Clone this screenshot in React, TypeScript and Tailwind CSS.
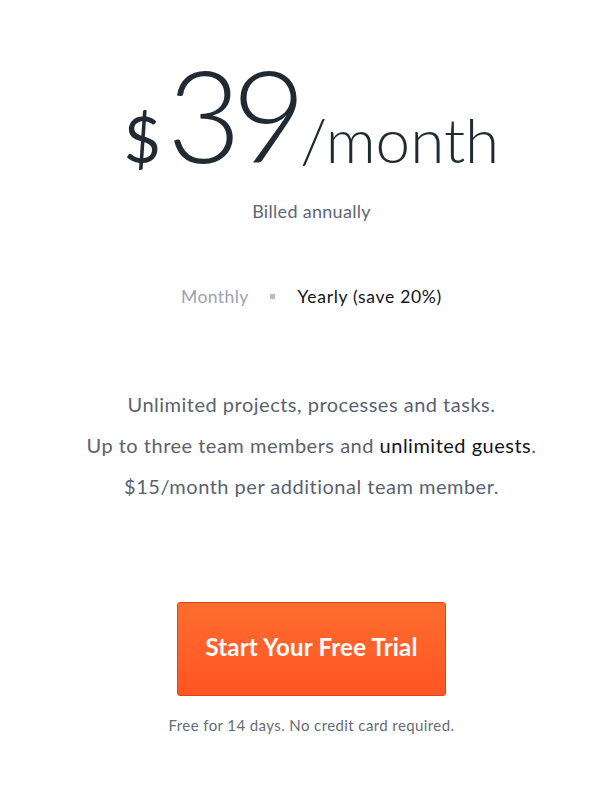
export default function App() {
  const body = { fontFamily: "Lato, 'Open Sans', sans-serif" };
  return (
    <div className="w-[595px] h-[790px] bg-white flex flex-col items-center pl-[28px]" style={body}>
      <div className="mt-[50px] flex items-baseline text-[#1f2a33]">
        <span className="text-[64px] leading-none mr-[6px]">$</span>
        <span className="text-[128px] font-light leading-none tracking-[-9px]">39</span>
        <span className="text-[62px] font-light leading-none ml-[3px]">/month</span>
      </div>
      <div className="mt-[24px] text-[18px] text-[#5f6672] leading-none tracking-[0.3px]">Billed annually</div>
      <div className="mt-[68px] flex items-center text-[17.5px] leading-none tracking-[0.4px]">
        <span className="text-[#9aa4b0]">Monthly</span>
        <span className="ml-[21px] mr-[23px] w-[5px] h-[5px] bg-[#b5bcc5]" />
        <span className="text-[#111418] tracking-[0.7px]">Yearly (save 20%)</span>
      </div>
      <div className="mt-[88px] flex flex-col items-center gap-[21px] text-[20px] text-[#5a6270] leading-none tracking-[0.5px]">
        <div>Unlimited projects, processes and tasks.</div>
        <div>
          Up to three team members and <span className="text-[#111418]">unlimited guests</span>.
        </div>
        <div>$15/month per additional team member.</div>
      </div>
      <button className="mt-[106px] w-[269px] h-[94px] rounded-[3px] border border-[#d8451b] bg-gradient-to-b from-[#ff6d2e] to-[#ff5423] text-white text-[24px] font-bold tracking-[0.2px] pb-[4px]">
        Start Your Free Trial
      </button>
      <div className="mt-[22px] text-[15px] text-[#666c75] leading-none tracking-[0.4px]">Free for 14 days. No credit card required.</div>
    </div>
  );
}
